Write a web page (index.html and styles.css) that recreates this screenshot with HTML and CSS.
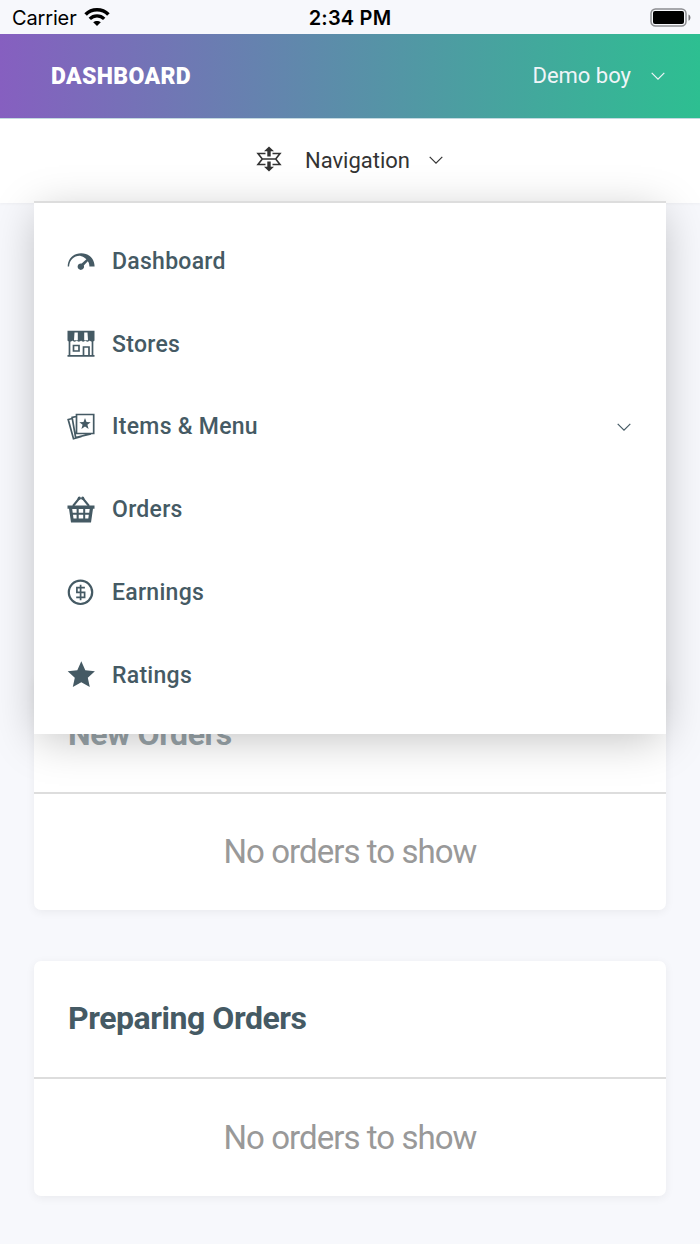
FILE: index.html
```
<!DOCTYPE html>
<html lang="en">
<head>
<meta charset="utf-8">
<title>Dashboard</title>
<link rel="stylesheet" href="styles.css">
</head>
<body>
<div class="status">
  <div class="carrier"><span>Carrier</span>
    <svg class="wifi" viewBox="0 0 26 20"><g fill="none" stroke="#000"><path stroke-width="3.6" d="M1.6 7.4C7.8 1.1 18.2 1.1 24.4 7.4"/><path stroke-width="3.3" d="M5.8 11.900c4-4 10.4-4 14.4 0"/></g><path d="M13 19l-3.8-3.8c2.100-1.700 5.500-1.700 7.600 0z"/></svg>
  </div>
  <div class="clock">2:34 PM</div>
  <svg class="battery" viewBox="0 0 42 20"><rect x="1" y="1" width="35" height="17" rx="4.500" fill="none" stroke="#8d8d91" stroke-width="1.500"/><rect x="3" y="3" width="31" height="13" rx="2" /><path d="M38.500 6.500c2.600 1.200 2.600 5 0 6.200z" fill="#77777b"/></svg>
</div>
<header class="topbar">
  <h1 class="title">DASHBOARD</h1>
  <div class="user"><span class="name">Demo boy</span><svg class="chev" viewBox="0 0 14 8"><path d="M.7.8L7 7.100 13.300.8"/></svg></div>
</header>
<nav class="nav">
  <svg class="navicon" viewBox="0 0 26 26"><g fill="none" stroke="#333" stroke-width="1.600"><path d="M9.500 7.500H2L6.300 13 2 18.500h7.500M16.500 7.500H24L19.700 13l4.300 5.500h-7.500M6 13h14"/></g><path fill="#333" d="M13 .5l5 4.800h-3.300V10.500h-3.400V5.300H8zM13 25.500l5-4.800h-3.300V15.500h-3.400v5.200H8z"/></svg>
  <span class="navlabel">Navigation</span>
  <svg class="chev" viewBox="0 0 14 8"><path d="M.7.8L7 7.100 13.300.8"/></svg>
  <ul class="menu">
    <li class="item"><svg class="icon" viewBox="0 0 28 28"><path d="M.7 19.500C.7 11.500 6.600 6.300 14.200 6.300s13.400 5.200 13.400 13.200h-5.200c0-2.200-.6-3.900-1.600-5.200l-4 4.200a3.200 3.200 0 1 1-2.100-1.900l4.700-4.300C17.800 11 16 9.100 13.600 8.900 7.500 8.400 2.500 13 2.100 19.500z"/></svg><span>Dashboard</span></li>
    <li class="item"><svg class="icon" viewBox="0 0 28 28"><path d="M.5.800h27v9.700c-1 1.500-3.800 1.500-4.800 0-1 1.500-3.600 1.500-4.300 0-1 1.500-3.600 1.500-4.300 0-1 1.500-3.600 1.500-4.300 0-1 1.500-3.600 1.500-4.300 0-1 1.500-4 1.500-5 0z"/><path fill="#fff" d="M7.500 2.500h3.300v7.700H7zM17.200 2.500h3.300l.5 7.700H17.200z"/><path class="line" d="M2.500 11v14.500M25.500 11v14.500M.5 25.800h27M16.500 25V17H22v8M6.500 15.500H12V21H6.500z"/></svg><span>Stores</span></li>
    <li class="item"><svg class="icon" viewBox="0 0 28 28"><path class="line" d="M9.500 1.500h17.200v19h-17.200zM9.300 3.500l-4.200 1 3.500 20L24 20.800M5.300 5.500L1.200 6.500 6.500 25.700l8-2.300"/><path d="M18 5l1.500 4.100 4.200.1-3.300 2.600 1.200 4.100-3.600-2.400-3.600 2.400 1.200-4.100-3.300-2.600 4.200-.1z"/></svg><span>Items &amp; Menu</span><svg class="chev" viewBox="0 0 14 8"><path d="M.7.8L7 7.100 13.300.8"/></svg></li>
    <li class="item"><svg class="icon" viewBox="0 0 28 28"><path class="handle" d="M6 10l6.500-8M22 10l-6.500-8"/><circle cx="12.300" cy="2.200" r="1.600"/><circle cx="15.700" cy="2.200" r="1.600"/><path fill-rule="evenodd" d="M.5 9.500h27v3.300H26l-2 13.700H4L2 12.800H.5zM5.200 13l.5 3.700h3.900V13zm6.500 0v3.700h4.500V13zm6.500 0v3.700h4l.5-3.700zM6 18.700l.5 3.700h3.100v-3.700zm5.700 0v3.700h4.500v-3.700zm6.500 0v3.700h3.100l.5-3.700z"/></svg><span>Orders</span></li>
    <li class="item"><svg class="icon" viewBox="0 0 28 28"><circle cx="13.500" cy="13.300" r="11.700" fill="none" stroke="#455a64" stroke-width="2.200"/><path class="line" d="M17.900 8.600H9.900v4.800h7.700v5H9.200M13.600 5.800v15.400"/></svg><span>Earnings</span></li>
    <li class="item"><svg class="icon" viewBox="0 0 28 28"><path d="M14.300 .3l4 8.900 9.600 1-7.100 6.500 2 9.400-8.500-4.800-8.500 4.800 2-9.400L.7 10.200l9.600-1z"/></svg><span>Ratings</span></li>
  </ul>
</nav>
<main class="content">
  <section class="card"><h2 class="heading faded">New Orders</h2><p class="empty">No orders to show</p></section>
  <section class="card"><h2 class="heading">Preparing Orders</h2><p class="empty">No orders to show</p></section>
</main>
</body>
</html>
```
FILE: styles.css
```
* { box-sizing: border-box; }
body { margin: 0; background: #f7f8fc; font-family: Roboto, "Liberation Sans", sans-serif; height: 1244px; overflow: hidden; }
.status { height: 34px; display: grid; grid-template-columns: 1fr auto 1fr; align-items: center; padding: 2px 8px 0 12px; color: #000; font-family: Inter, sans-serif; font-size: 20px; }
.carrier { display: flex; align-items: center; gap: 8px; letter-spacing: -.15px; }
.wifi { width: 26px; height: 20px; margin: -3px 0 0 -1px; }
.clock { font-weight: 600; padding-right: 4px; letter-spacing: .2px; }
.battery { width: 42px; height: 20px; justify-self: end; margin-top: -1px; }
.topbar { height: 84px; display: flex; align-items: center; justify-content: space-between; padding: 0 35px 0 51px; background: linear-gradient(90deg, #865fc0, #2dbf91); color: #fff; }
.title { margin: 0; font-size: 23px; font-weight: 900; letter-spacing: .35px; }
.user { display: flex; align-items: center; gap: 20px; font-size: 22px; color: #f0f5f8; }
.name { margin-top: -2px; }
.chev { width: 14px; height: 8px; fill: none; stroke: currentColor; stroke-width: 1.2; }
.nav { position: relative; z-index: 2; height: 84.5px; border-top: 1px solid #c3d9e0; padding: 0 1px 1px 0; display: flex; align-items: center; justify-content: center; background: #fff; color: #333; font-size: 22px; box-shadow: 0 1px 3px rgba(0,0,0,.04); }
.navicon { width: 26px; height: 26px; margin: -2px 23px 0 0; }
.navlabel { margin-right: 19px; }
.menu { position: absolute; top: 82px; left: 34px; right: 34px; height: 533px; margin: 0; padding: 17px 34px 15px 33px; list-style: none; background: #fff; border-top: 2px solid #ddd; box-shadow: 0 8px 42px -4px rgba(0,0,0,.25); color: #455a64; }
.item { height: 82.8px; display: flex; align-items: center; font-size: 23px; font-weight: 500; letter-spacing: .28px; }
.item .chev { margin-left: auto; margin-right: 1px; }
.icon { width: 28px; height: 28px; margin-right: 17px; fill: #455a64; }
.icon .line { fill: none; stroke: #455a64; stroke-width: 1.7; }
.icon .handle { fill: none; stroke: #455a64; stroke-width: 2; }
.content { padding: 473px 34px 0; display: flex; flex-direction: column; gap: 51px; }
.card { background: #fff; border-radius: 7px; box-shadow: 0 2px 10px rgba(0,0,0,.06); height: 234.5px; }
.heading { margin: 0; height: 118px; padding: 0 34px 2px; display: flex; align-items: center; border-bottom: 2px solid #ddd; color: #455a64; font-size: 32px; font-weight: 700; letter-spacing: -.45px; }
.faded { color: #9aa5aa; padding-bottom: 0; }
.empty { margin: 0; height: 116px; display: flex; align-items: center; justify-content: center; color: #999; font-size: 33px; letter-spacing: -.95px; }
```
